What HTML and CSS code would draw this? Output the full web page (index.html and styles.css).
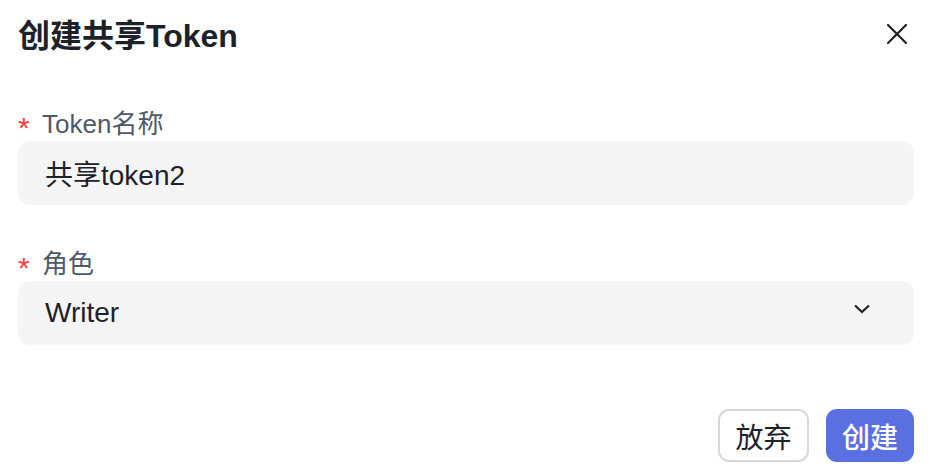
FILE: index.html
```html
<!DOCTYPE html>
<html lang="zh-CN">
<head>
<meta charset="utf-8">
<title>创建共享Token</title>
<link rel="stylesheet" href="styles.css">
</head>
<body>
<div class="dialog">
  <div class="header">
    <div class="title">创建共享Token</div>
    <button class="close" aria-label="关闭">
      <svg width="20" height="20" viewBox="0 0 20 20"><path d="M1 1 L19 19 M19 1 L1 19" stroke="#1d2129" stroke-width="2.2" fill="none" stroke-linecap="square"/></svg>
    </button>
  </div>
  <div class="form">
    <div class="field">
      <div class="label"><span class="req">*</span>Token名称</div>
      <div class="input">共享token2</div>
    </div>
    <div class="field">
      <div class="label"><span class="req">*</span>角色</div>
      <div class="input select">
        <span>Writer</span>
        <svg class="chev" width="18" height="10" viewBox="0 0 18 10"><path d="M2 1.5 L9 8 L16 1.5" stroke="#1d2129" stroke-width="2.2" fill="none"/></svg>
      </div>
    </div>
  </div>
  <div class="footer">
    <button class="btn secondary">放弃</button>
    <button class="btn primary">创建</button>
  </div>
</div>
</body>
</html>
```
FILE: styles.css
```css
html, body {
  margin: 0;
  padding: 0;
  background: #ffffff;
}
body {
  font-family: "Liberation Sans", "Noto Sans CJK SC", sans-serif;
  color: #1d2129;
}
.dialog {
  width: 940px;
  height: 474px;
  box-sizing: border-box;
  padding: 0 26px 0 18px;
  display: flex;
  flex-direction: column;
}
.header {
  display: flex;
  align-items: center;
  justify-content: space-between;
  height: 44px;
  padding-top: 14px;
}
.title {
  font-size: 32px;
  font-weight: 600;
  color: #1d2129;
  line-height: 44px;
}
.close {
  border: 0;
  background: none;
  padding: 0;
  margin-right: 7px;
  margin-top: -4px;
  width: 20px;
  height: 20px;
  display: flex;
}
.form {
  display: flex;
  flex-direction: column;
  gap: 40px;
  margin-top: 47px;
}
.field {
  display: flex;
  flex-direction: column;
}
.label {
  font-size: 26px;
  line-height: 36px;
  height: 36px;
  color: #4e5969;
  white-space: nowrap;
}
.req {
  display: inline-block;
  color: #f53f3f;
  font-size: 30px;
  width: 24px;
  position: relative;
  top: 5px;
}
.input {
  height: 64px;
  border-radius: 12px;
  background: #f5f5f5;
  padding: 0 26px 0 27px;
  font-size: 28px;
  color: #1d2129;
  display: flex;
  align-items: center;
}
.select {
  justify-content: space-between;
  padding-right: 43px;
}
.chev {
  margin-top: -8px;
}
.footer {
  margin-top: 64px;
  display: flex;
  justify-content: flex-end;
  gap: 17px;
}
.btn {
  box-sizing: border-box;
  height: 53px;
  border-radius: 11px;
  font-family: "Liberation Sans", "Noto Sans CJK SC", sans-serif;
  font-size: 28px;
  padding: 0;
  white-space: nowrap;
  display: flex;
  align-items: center;
  justify-content: center;
}
.secondary {
  width: 91px;
  background: #ffffff;
  border: 2px solid #d4d7dc;
  color: #1d2129;
}
.primary {
  width: 88px;
  background: #5a6fe0;
  border: 0;
  color: #ffffff;
  font-weight: 500;
}
```
